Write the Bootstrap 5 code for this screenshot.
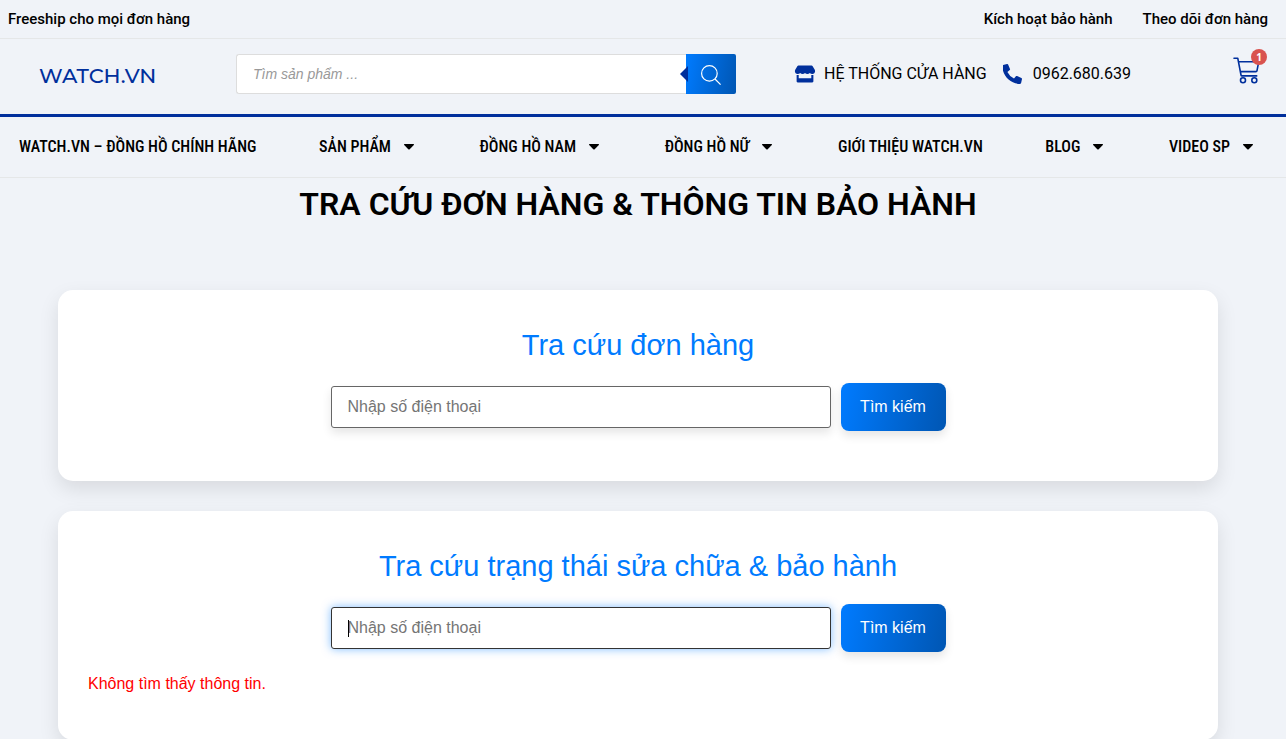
<!DOCTYPE html>
<html lang="vi">
<head>
<meta charset="utf-8">
<meta name="viewport" content="width=device-width, initial-scale=1">
<title>Tra cứu đơn hàng - WATCH.VN</title>
<link href="https://cdn.jsdelivr.net/npm/bootstrap@5.3.0/dist/css/bootstrap.min.css" rel="stylesheet">
<style>
  :root { --brand: #002f9c; --grad: linear-gradient(100deg, #007bff, #0056b3); }
  body { background: #f0f3f8; color: #000; font-family: Roboto, "Liberation Sans", sans-serif; overflow-x: hidden; }
  a { color: inherit; text-decoration: none; }
  .topbar { min-height: 39px; padding: 0 18px 0 8px; font-size: 15px; font-weight: 500; border-bottom: 1px solid #e5e7e8; }
  .topbar-links { gap: 30px; }
  .masthead { min-height: 78px; padding: 0 26px 5px 39px; border-bottom: 3px solid var(--brand); }
  .brand-name { width: 197px; padding-top: 4px; color: var(--brand); font: 500 21px/30px Montserrat, Lato, sans-serif; }
  .search { width: 500px; height: 40px; }
  .search-input { border: 1px solid #ddd; border-right: 0; border-radius: 3px 0 0 3px; padding: 0 16px; font: italic 14px/20px "Liberation Sans", Arial, sans-serif; }
  .search-input::placeholder { color: #999; }
  .search-btn { width: 50px; border: 0; border-radius: 0 2px 2px 0; background: var(--grad); }
  .search-btn::before { content: ""; position: absolute; left: -6px; top: 12px; border: solid transparent; border-width: 8px 8px 8px 0; border-right-color: var(--brand); }
  .contacts { margin-left: 58px; gap: 16px; font-size: 16px; }
  .cart { margin-bottom: 7px; }
  .cart-count { top: -8px; right: -7px; width: 16px; height: 16px; background: #d9534f; color: #fff; font: 700 10px/16px "Open Sans", sans-serif; }
  .mainnav { min-height: 61px; padding: 0 30px 0 19px; border-bottom: 1px solid #e5e7e8; font-family: "Roboto Condensed", Roboto, sans-serif; font-size: 16px; font-weight: 500; }
  .mainnav .has-menu { display: flex; align-items: center; gap: 13px; padding-right: 3px; }
  .page-title { font-size: 32px; line-height: 38px; font-weight: 600; margin: 7px 0 67px; }
  .lookup-area { padding: 0 68px 0 58px; }
  .lookup { background: #fff; border-radius: 15px; padding: 30px; margin-bottom: 30px; box-shadow: 0 8px 20px rgba(0,0,0,.1); font-family: "Liberation Sans", Arial, sans-serif; }
  .lookup-title { color: #007bff; font-size: 29px; line-height: 36px; margin: 7px 0 20px; font-weight: 400; }
  .lookup-form { gap: 10px; }
  .phone { width: 500px; height: 42px; border: 1px solid #666; border-radius: 3px; padding: 0 16px; font-size: 16px; outline: 0; box-shadow: 0 5px 10px rgba(0,0,0,.1); }
  .phone::placeholder { color: #757575; }
  .phone:focus { border-color: #333; box-shadow: 0 0 10px rgba(0,123,255,.5); caret-color: transparent; }
  .phone-caret { display: none; position: absolute; left: 17px; top: 13px; width: 1px; height: 17px; background: #000; }
  .phone:focus + .phone-caret { display: block; }
  .submit { width: 105px; height: 48px; padding: 0; border: 0; border-radius: 8px; background: var(--grad); color: #fff; box-shadow: 0 5px 10px rgba(0,0,0,.1); }
  .result { min-height: 20px; }
  .result-error { color: red; line-height: 24px; margin: 20px 0 14px; }
</style>
</head>
<body>
<header>
  <div class="topbar d-flex justify-content-between align-items-center">
    <span>Freeship cho mọi đơn hàng</span>
    <nav class="topbar-links d-flex" aria-label="Hỗ trợ">
      <a href="#">Kích hoạt bảo hành</a>
      <a href="#">Theo dõi đơn hàng</a>
    </nav>
  </div>

  <div class="masthead d-flex align-items-center">
    <a class="brand-name" href="#">WATCH.VN</a>
    <form class="search d-flex" role="search">
      <input class="search-input flex-grow-1" type="search" placeholder="Tìm sản phẩm ..." aria-label="Tìm sản phẩm">
      <button class="search-btn position-relative p-0" type="submit" aria-label="Tìm">
        <svg width="20" height="20" viewBox="0 0 20 20" fill="none" stroke="#fff" stroke-width="1.2"><circle cx="8.4" cy="8.4" r="7.8"/><path d="M14 14l5.6 5.6"/></svg>
      </button>
    </form>
    <div class="contacts d-flex align-items-center">
      <a class="d-flex align-items-center" href="#">
        <svg class="me-2" width="22" height="18" viewBox="-28 0 672 512" fill="#002f9c"><path d="M602 118.600L537.100 15C531.300 5.700 521 0 510 0H106C95 0 84.700 5.700 78.900 15L14 118.600c-33.500 53.500-3.800 127.900 58.800 136.400 4.500.600 9.100.900 13.700.900 29.600 0 55.800-13 73.800-33.100 18 20.100 44.300 33.100 73.800 33.100 29.600 0 55.800-13 73.800-33.100 18 20.100 44.300 33.100 73.800 33.100 29.600 0 55.800-13 73.800-33.100 18.100 20.100 44.300 33.100 73.800 33.100 4.700 0 9.200-.300 13.700-.900 62.800-8.400 92.600-82.800 59-136.400zM529.500 288c-10 0-19.900-1.500-29.500-3.800V384H116v-99.800c-9.600 2.200-19.500 3.800-29.500 3.800-6 0-12.100-.400-18-1.200-5.600-.800-11.100-2.100-16.400-3.600V480c0 17.700 14.300 32 32 32h448c17.700 0 32-14.300 32-32V283.200c-5.400 1.600-10.800 2.900-16.400 3.600-6.100.800-12.100 1.200-18.200 1.200z"/></svg>
        <span>HỆ THỐNG CỬA HÀNG</span>
      </a>
      <a class="d-flex align-items-center" href="#">
        <svg class="me-2" width="22" height="20" viewBox="1 0 22 20" fill="#002f9c"><path d="M1.100 0.900 5 0c.500-.100.900.200 1.100.600l1.900 4.300c.200.400.100.900-.300 1.200L5.400 8a14.500 14.500 0 0 0 6.600 6.600l1.900-2.300c.300-.400.800-.500 1.200-.300l4.300 1.900c.500.200.700.700.600 1.200l-.900 4c-.100.500-.500.800-1 .8C8.400 19.900.300 11.600.300 1.800c0-.400.300-.800.800-.900z"/></svg>
        <span>0962.680.639</span>
      </a>
    </div>
    <a class="cart ms-auto position-relative" href="#" aria-label="Giỏ hàng">
      <svg class="d-block" width="27" height="27" viewBox="0 0 27 27" fill="none" stroke="#002f9c" stroke-width="1.600" stroke-linecap="round" stroke-linejoin="round"><path d="M1 1.300h3.800L8 18c.100.600.500.900 1 .900h14.700M5.800 4.800H25.700L24 13.700c-.100.600-.600.900-1.100.900H7.500"/><circle cx="10" cy="23.200" r="2.500"/><circle cx="21.300" cy="23.200" r="2.500"/></svg>
      <span class="cart-count position-absolute rounded-circle text-center">1</span>
    </a>
  </div>

  <nav class="mainnav d-flex justify-content-between align-items-center" aria-label="Menu chính">
    <a href="#">WATCH.VN – ĐỒNG HỒ CHÍNH HÃNG</a>
    <a class="has-menu" href="#">SẢN PHẨM <svg width="10" height="6" viewBox="0 0 10 6"><path d="M.500 0h9q.8.200.3.900L5.700 5.300q-.7.600-1.400 0L.200.900Q-.300.200.500 0z"/></svg></a>
    <a class="has-menu" href="#">ĐỒNG HỒ NAM <svg width="10" height="6" viewBox="0 0 10 6"><path d="M.500 0h9q.8.200.3.900L5.700 5.300q-.7.600-1.400 0L.200.900Q-.300.200.500 0z"/></svg></a>
    <a class="has-menu" href="#">ĐỒNG HỒ NỮ <svg width="10" height="6" viewBox="0 0 10 6"><path d="M.500 0h9q.8.200.3.900L5.700 5.300q-.7.600-1.400 0L.200.900Q-.300.200.500 0z"/></svg></a>
    <a href="#">GIỚI THIỆU WATCH.VN</a>
    <a class="has-menu" href="#">BLOG <svg width="10" height="6" viewBox="0 0 10 6"><path d="M.500 0h9q.8.200.3.900L5.700 5.300q-.7.600-1.400 0L.200.900Q-.300.200.500 0z"/></svg></a>
    <a class="has-menu" href="#">VIDEO SP <svg width="10" height="6" viewBox="0 0 10 6"><path d="M.500 0h9q.8.200.3.900L5.700 5.300q-.7.600-1.400 0L.200.900Q-.300.200.500 0z"/></svg></a>
  </nav>
</header>

<main class="lookup-area">
  <h1 class="page-title text-center">TRA CỨU ĐƠN HÀNG &amp; THÔNG TIN BẢO HÀNH</h1>

  <section class="lookup">
    <h2 class="lookup-title text-center">Tra cứu đơn hàng</h2>
    <form class="lookup-form d-flex justify-content-center align-items-center">
      <input class="phone" type="text" placeholder="Nhập số điện thoại" aria-label="Số điện thoại đặt hàng">
      <button class="submit" type="submit">Tìm kiếm</button>
    </form>
    <div class="result"></div>
  </section>

  <section class="lookup mb-0">
    <h2 class="lookup-title text-center">Tra cứu trạng thái sửa chữa &amp; bảo hành</h2>
    <form class="lookup-form d-flex justify-content-center align-items-center">
      <div class="position-relative">
        <input class="phone d-block" type="text" placeholder="Nhập số điện thoại" aria-label="Số điện thoại bảo hành" autofocus>
        <span class="phone-caret"></span>
      </div>
      <button class="submit" type="submit">Tìm kiếm</button>
    </form>
    <p class="result-error">Không tìm thấy thông tin.</p>
  </section>
</main>
<script src="https://cdn.jsdelivr.net/npm/bootstrap@5.3.0/dist/js/bootstrap.bundle.min.js"></script>
</body>
</html>
